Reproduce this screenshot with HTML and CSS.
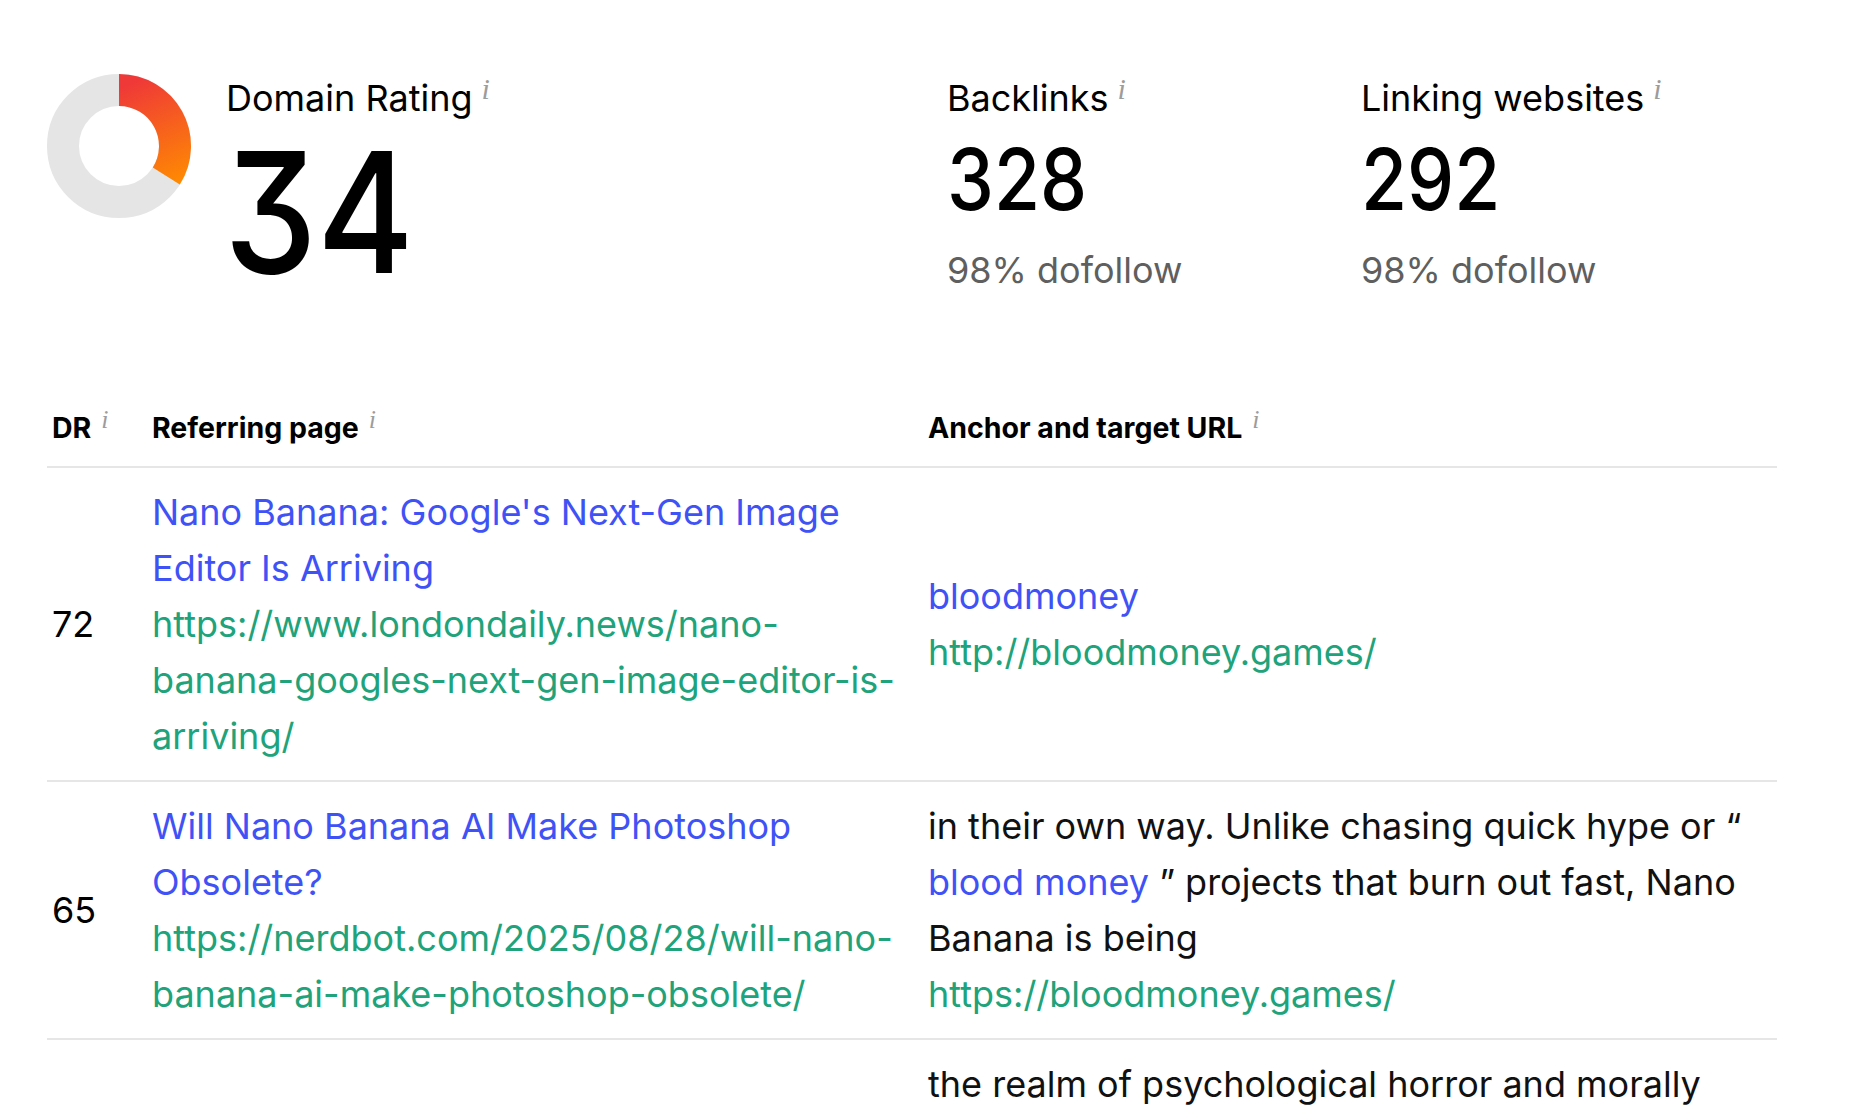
FILE: index.html
```html
<!DOCTYPE html>
<html lang="en">
<head>
<meta charset="utf-8">
<title>Backlinks</title>
<link rel="stylesheet" href="styles.css">
</head>
<body>
<main class="page">
  <section class="stats">
    <div class="stat-dr">
      <svg class="donut" width="144" height="144" viewBox="0 0 144 144" aria-hidden="true">
        <defs>
          <linearGradient id="drg" gradientUnits="userSpaceOnUse" x1="80" y1="10" x2="125" y2="115">
            <stop offset="0" stop-color="#ef3838"/>
            <stop offset="1" stop-color="#ff8c00"/>
          </linearGradient>
        </defs>
        <circle cx="72" cy="72" r="56" fill="none" stroke="#e5e5e5" stroke-width="32"/>
        <path d="M72 16 A56 56 0 0 1 119.28 102.0" fill="none" stroke="url(#drg)" stroke-width="32"/>
      </svg>
      <div class="stat-block">
        <div class="stat-label">Domain Rating<sup class="info">i</sup></div>
        <div class="dr-value">34</div>
      </div>
    </div>
    <div class="stat-block">
      <div class="stat-label">Backlinks<sup class="info">i</sup></div>
      <div class="stat-value">328</div>
      <div class="stat-sub">98% dofollow</div>
    </div>
    <div class="stat-block">
      <div class="stat-label">Linking websites<sup class="info">i</sup></div>
      <div class="stat-value">292</div>
      <div class="stat-sub">98% dofollow</div>
    </div>
  </section>

  <table class="links">
    <colgroup>
      <col class="c-dr">
      <col class="c-ref">
      <col class="c-anchor">
    </colgroup>
    <thead>
      <tr>
        <th>DR<sup class="info">i</sup></th>
        <th>Referring page<sup class="info">i</sup></th>
        <th>Anchor and target URL<sup class="info">i</sup></th>
      </tr>
    </thead>
    <tbody>
      <tr>
        <td class="dr">72</td>
        <td>
          <a class="title" href="#">Nano Banana: Google's Next-Gen Image Editor Is Arriving</a>
          <a class="url" href="#">https://www.londondaily.news/nano-banana-googles-next-gen-image-editor-is-arriving/</a>
        </td>
        <td>
          <a class="title" href="#">bloodmoney</a>
          <a class="url" href="#">http://bloodmoney.games/</a>
        </td>
      </tr>
      <tr>
        <td class="dr">65</td>
        <td>
          <a class="title" href="#">Will Nano Banana AI Make Photoshop Obsolete?</a>
          <a class="url" href="#">https://nerdbot.com/2025/08/28/will-nano-banana-ai-make-photoshop-obsolete/</a>
        </td>
        <td>
          <span class="snippet">in their own way. Unlike chasing quick hype or “ <a class="inline" href="#">blood money</a> ” projects that burn out fast, Nano Banana is being</span>
          <a class="url" href="#">https://bloodmoney.games/</a>
        </td>
      </tr>
      <tr>
        <td class="dr">58</td>
        <td>
          <a class="title" href="#">Bloodmoney Review</a>
          <a class="url" href="#">https://www.gamereview.blog/bloodmoney/</a>
        </td>
        <td>
          <span class="snippet">the realm of psychological horror and morally ambiguous choices, where every click brings you closer to the money you need and further from the person you were. Few indie titles manage this so well, and <a class="inline" href="#">bloodmoney</a> stands out</span>
          <a class="url" href="#">https://bloodmoney.games/</a>
        </td>
      </tr>
    </tbody>
  </table>
</main>
</body>
</html>
```

FILE: styles.css
```css
html, body {
  margin: 0;
  padding: 0;
  background: #ffffff;
}

body {
  font-family: Inter, "Noto Sans", "Liberation Sans", sans-serif;
  color: #000000;
}

.page {
  padding: 74px 0 0 47px;
  width: 1730px;
}

.stats {
  display: grid;
  grid-template-columns: 900px 414px 1fr;
  align-items: start;
}

.stat-dr {
  display: flex;
  align-items: flex-start;
  gap: 35px;
}

.donut {
  display: block;
  flex: none;
}

.stat-block {
  padding-top: 4px;
}

.stat-label {
  font-size: 36px;
  line-height: 40px;
  font-weight: 400;
  white-space: nowrap;
}

.info {
  font-family: "Liberation Serif", "DejaVu Serif", serif;
  font-style: italic;
  color: #9c9c9c;
  font-size: 30px;
  font-weight: 400;
  margin-left: 9px;
  vertical-align: 12px;
  line-height: 0;
}

.dr-value {
  font-size: 168px;
  line-height: 188px;
  font-weight: 450;
  letter-spacing: 0;
  font-feature-settings: "cv09" 1;
  transform: scaleX(0.88);
  transform-origin: left center;
  margin-left: -2px;
}

.stat-value {
  font-size: 85px;
  line-height: 103px;
  font-weight: 500;
  letter-spacing: 0;
  transform: scaleX(0.88);
  transform-origin: left center;
  margin-top: 10px;
}

.stat-sub {
  font-size: 36px;
  line-height: 44px;
  color: #5f5f5f;
  margin-top: 17px;
}

.links {
  margin-top: 83px;
  width: 1730px;
  border-collapse: collapse;
  table-layout: fixed;
}

.c-dr { width: 100px; }
.c-ref { width: 776px; }
.c-anchor { width: 854px; }

.links th,
.links td {
  text-align: left;
  vertical-align: middle;
}

.links th {
  padding: 18px 22px 18px 5px;
  font-size: 28.5px;
  line-height: 41px;
  font-weight: 700;
  border-bottom: 2px solid #e6e6e6;
  white-space: nowrap;
}

.links th .info {
  font-size: 26px;
  margin-left: 10px;
  vertical-align: 10px;
}

.links td {
  padding: 16px 22px 16px 5px;
  font-size: 36px;
  line-height: 56px;
  color: #111111;
  border-bottom: 2px solid #e6e6e6;
}

.links td.dr {
  color: #000000;
}

.title,
.url,
.snippet {
  display: block;
  text-decoration: none;
}

.title,
.inline {
  color: #3f52f6;
  text-decoration: none;
}

.url {
  color: #20a37a;
}
```
